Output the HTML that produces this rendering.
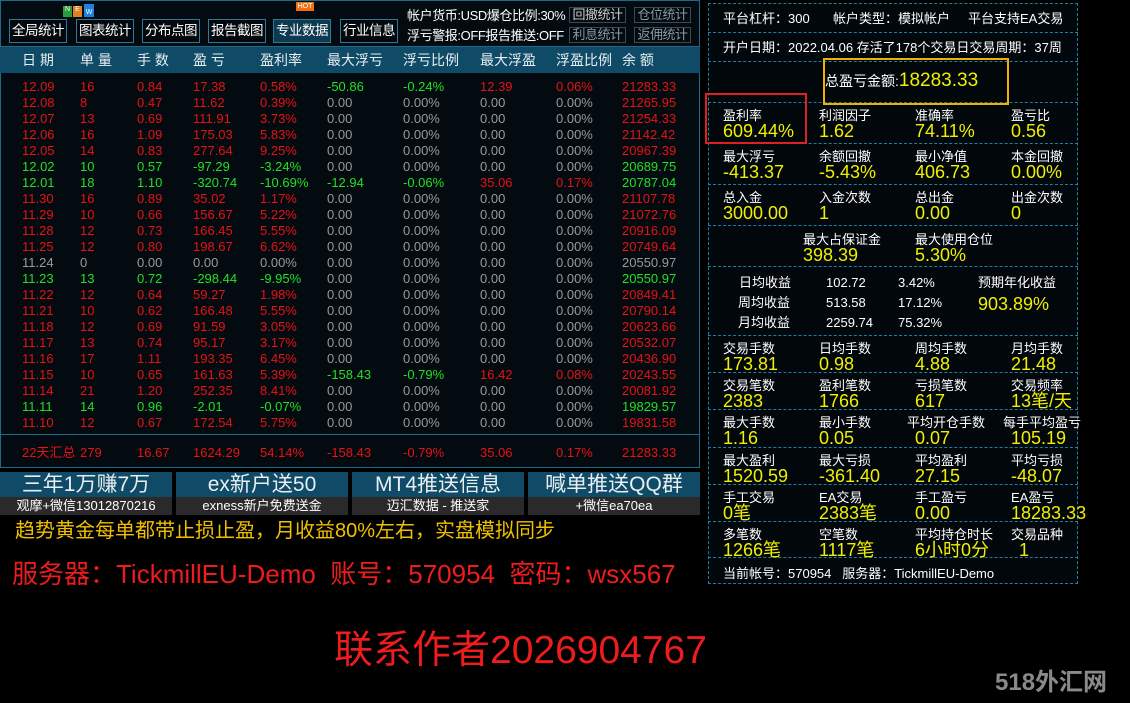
<!DOCTYPE html>
<html><head><meta charset="utf-8"><style>
*{margin:0;padding:0;box-sizing:border-box}
body{width:1130px;height:703px;background:#000;position:relative;overflow:hidden;font-family:"Liberation Sans","Noto Sans CJK SC",sans-serif;color:#fff}
.a{position:absolute;white-space:nowrap}
.btn{position:absolute;top:19px;width:58px;height:24px;border:1px solid #2a7a9a;background:#02080c;color:#fff;font-size:13.5px;line-height:22px;text-align:center;overflow:hidden;letter-spacing:-0.5px}
.sbtn{position:absolute;height:16px;width:57px;border:1px solid #3a4a55;color:#8a9aa5;font-size:13px;line-height:14px;text-align:center;overflow:hidden;letter-spacing:-0.5px}
#tbl{position:absolute;left:0;top:0;width:700px;height:468px;background:#030a10;border:1px solid #1c6a88}
.hd{position:absolute;left:0;top:46px;width:700px;height:27px;background:#0f4a66;border-top:1px solid #1c6a88}
.hd span{position:absolute;top:5px;font-size:14px;line-height:17px;color:#e8eef2}
.r{position:absolute;left:0;height:16px;width:700px;font-size:13px;line-height:16px}
.r span{position:absolute}
.r span:nth-child(1){left:22px}.r span:nth-child(2){left:80px}.r span:nth-child(3){left:137px}.r span:nth-child(4){left:193px}.r span:nth-child(5){left:260px}.r span:nth-child(6){left:327px}.r span:nth-child(7){left:403px}.r span:nth-child(8){left:480px}.r span:nth-child(9){left:556px}.r span:nth-child(10){left:622px}
.R{color:#e81212}.G{color:#22e022}.Y{color:#9a9a9a}
.ad{position:absolute;top:472px;width:172px;height:43px}
.ad .t{height:25px;background:#0f4a66;color:#e8eef2;font-size:21px;line-height:25px;text-align:center}
.ad .b{height:18px;background:#2a2a2a;color:#fff;font-size:13px;line-height:18px;text-align:center}
#rp{position:absolute;left:708px;top:3px;width:370px;height:581px;background:#02070b;border:1px dashed #1f7fa0}
.ln{position:absolute;left:708px;width:370px;border-top:1px dashed #1f7fa0}
.lb{position:absolute;font-size:13px;line-height:15px;color:#fff;white-space:nowrap}
.v{position:absolute;font-size:18px;line-height:20px;color:#f0f000;white-space:nowrap}
</style></head><body>
<div id="tbl"></div>
<div class="btn" style="left:9px">全局统计</div>
<div class="btn" style="left:76px">图表统计</div>
<div class="btn" style="left:142px">分布点图</div>
<div class="btn" style="left:208px">报告截图</div>
<div class="btn" style="left:273px;background:#0d3a50">专业数据</div>
<div class="btn" style="left:340px">行业信息</div>
<div class="a" style="left:63px;top:6px;width:9px;height:11px;background:#2a9a3a;font-size:7px;color:#fff;text-align:center">N</div>
<div class="a" style="left:73px;top:6px;width:9px;height:11px;background:#e08020;font-size:7px;color:#fff;text-align:center">E</div>
<div class="a" style="left:84px;top:4px;width:10px;height:13px;background:#2080e0;font-size:7px;color:#fff;text-align:center;line-height:17px">W</div>
<div class="a" style="left:296px;top:2px;width:18px;height:9px;background:#f07010;font-size:7px;color:#fff;text-align:center;line-height:9px">HOT</div>
<div class="a" style="left:407px;top:8px;font-size:13px;line-height:16px;color:#fff;letter-spacing:-0.4px">帐户货币:USD爆仓比例:30%</div>
<div class="a" style="left:407px;top:28px;font-size:13px;line-height:16px;color:#fff;letter-spacing:-0.4px">浮亏警报:OFF报告推送:OFF</div>
<div class="sbtn" style="left:569px;top:7px;color:#ccc">回撤统计</div>
<div class="sbtn" style="left:634px;top:7px">仓位统计</div>
<div class="sbtn" style="left:569px;top:27px">利息统计</div>
<div class="sbtn" style="left:634px;top:27px">返佣统计</div>
<div class="hd"><span style="left:22px">日 期</span><span style="left:80px">单 量</span><span style="left:137px">手 数</span><span style="left:193px">盈 亏</span><span style="left:260px">盈利率</span><span style="left:327px">最大浮亏</span><span style="left:403px">浮亏比例</span><span style="left:480px">最大浮盈</span><span style="left:556px">浮盈比例</span><span style="left:622px">余 额</span></div>

<div class="r R" style="top:79px"><span>12.09</span><span>16</span><span>0.84</span><span>17.38</span><span>0.58%</span><span class="G">-50.86</span><span class="G">-0.24%</span><span>12.39</span><span>0.06%</span><span>21283.33</span></div>
<div class="r R" style="top:95px"><span>12.08</span><span>8</span><span>0.47</span><span>11.62</span><span>0.39%</span><span class="Y">0.00</span><span class="Y">0.00%</span><span class="Y">0.00</span><span class="Y">0.00%</span><span>21265.95</span></div>
<div class="r R" style="top:111px"><span>12.07</span><span>13</span><span>0.69</span><span>111.91</span><span>3.73%</span><span class="Y">0.00</span><span class="Y">0.00%</span><span class="Y">0.00</span><span class="Y">0.00%</span><span>21254.33</span></div>
<div class="r R" style="top:127px"><span>12.06</span><span>16</span><span>1.09</span><span>175.03</span><span>5.83%</span><span class="Y">0.00</span><span class="Y">0.00%</span><span class="Y">0.00</span><span class="Y">0.00%</span><span>21142.42</span></div>
<div class="r R" style="top:143px"><span>12.05</span><span>14</span><span>0.83</span><span>277.64</span><span>9.25%</span><span class="Y">0.00</span><span class="Y">0.00%</span><span class="Y">0.00</span><span class="Y">0.00%</span><span>20967.39</span></div>
<div class="r G" style="top:159px"><span>12.02</span><span>10</span><span>0.57</span><span>-97.29</span><span>-3.24%</span><span class="Y">0.00</span><span class="Y">0.00%</span><span class="Y">0.00</span><span class="Y">0.00%</span><span>20689.75</span></div>
<div class="r G" style="top:175px"><span>12.01</span><span>18</span><span>1.10</span><span>-320.74</span><span>-10.69%</span><span>-12.94</span><span>-0.06%</span><span class="R">35.06</span><span class="R">0.17%</span><span>20787.04</span></div>
<div class="r R" style="top:191px"><span>11.30</span><span>16</span><span>0.89</span><span>35.02</span><span>1.17%</span><span class="Y">0.00</span><span class="Y">0.00%</span><span class="Y">0.00</span><span class="Y">0.00%</span><span>21107.78</span></div>
<div class="r R" style="top:207px"><span>11.29</span><span>10</span><span>0.66</span><span>156.67</span><span>5.22%</span><span class="Y">0.00</span><span class="Y">0.00%</span><span class="Y">0.00</span><span class="Y">0.00%</span><span>21072.76</span></div>
<div class="r R" style="top:223px"><span>11.28</span><span>12</span><span>0.73</span><span>166.45</span><span>5.55%</span><span class="Y">0.00</span><span class="Y">0.00%</span><span class="Y">0.00</span><span class="Y">0.00%</span><span>20916.09</span></div>
<div class="r R" style="top:239px"><span>11.25</span><span>12</span><span>0.80</span><span>198.67</span><span>6.62%</span><span class="Y">0.00</span><span class="Y">0.00%</span><span class="Y">0.00</span><span class="Y">0.00%</span><span>20749.64</span></div>
<div class="r Y" style="top:255px"><span>11.24</span><span>0</span><span>0.00</span><span>0.00</span><span>0.00%</span><span>0.00</span><span>0.00%</span><span>0.00</span><span>0.00%</span><span>20550.97</span></div>
<div class="r G" style="top:271px"><span>11.23</span><span>13</span><span>0.72</span><span>-298.44</span><span>-9.95%</span><span class="Y">0.00</span><span class="Y">0.00%</span><span class="Y">0.00</span><span class="Y">0.00%</span><span>20550.97</span></div>
<div class="r R" style="top:287px"><span>11.22</span><span>12</span><span>0.64</span><span>59.27</span><span>1.98%</span><span class="Y">0.00</span><span class="Y">0.00%</span><span class="Y">0.00</span><span class="Y">0.00%</span><span>20849.41</span></div>
<div class="r R" style="top:303px"><span>11.21</span><span>10</span><span>0.62</span><span>166.48</span><span>5.55%</span><span class="Y">0.00</span><span class="Y">0.00%</span><span class="Y">0.00</span><span class="Y">0.00%</span><span>20790.14</span></div>
<div class="r R" style="top:319px"><span>11.18</span><span>12</span><span>0.69</span><span>91.59</span><span>3.05%</span><span class="Y">0.00</span><span class="Y">0.00%</span><span class="Y">0.00</span><span class="Y">0.00%</span><span>20623.66</span></div>
<div class="r R" style="top:335px"><span>11.17</span><span>13</span><span>0.74</span><span>95.17</span><span>3.17%</span><span class="Y">0.00</span><span class="Y">0.00%</span><span class="Y">0.00</span><span class="Y">0.00%</span><span>20532.07</span></div>
<div class="r R" style="top:351px"><span>11.16</span><span>17</span><span>1.11</span><span>193.35</span><span>6.45%</span><span class="Y">0.00</span><span class="Y">0.00%</span><span class="Y">0.00</span><span class="Y">0.00%</span><span>20436.90</span></div>
<div class="r R" style="top:367px"><span>11.15</span><span>10</span><span>0.65</span><span>161.63</span><span>5.39%</span><span class="G">-158.43</span><span class="G">-0.79%</span><span>16.42</span><span>0.08%</span><span>20243.55</span></div>
<div class="r R" style="top:383px"><span>11.14</span><span>21</span><span>1.20</span><span>252.35</span><span>8.41%</span><span class="Y">0.00</span><span class="Y">0.00%</span><span class="Y">0.00</span><span class="Y">0.00%</span><span>20081.92</span></div>
<div class="r G" style="top:399px"><span>11.11</span><span>14</span><span>0.96</span><span>-2.01</span><span>-0.07%</span><span class="Y">0.00</span><span class="Y">0.00%</span><span class="Y">0.00</span><span class="Y">0.00%</span><span>19829.57</span></div>
<div class="r R" style="top:415px"><span>11.10</span><span>12</span><span>0.67</span><span>172.54</span><span>5.75%</span><span class="Y">0.00</span><span class="Y">0.00%</span><span class="Y">0.00</span><span class="Y">0.00%</span><span>19831.58</span></div>
<div class="a" style="left:0;top:434px;width:700px;border-top:1px solid #1c6a88"></div>
<div class="r R" style="top:445px"><span>22天汇总</span><span>279</span><span>16.67</span><span>1624.29</span><span>54.14%</span><span>-158.43</span><span>-0.79%</span><span>35.06</span><span>0.17%</span><span>21283.33</span></div>

<div class="ad" style="left:0"><div class="t">三年1万赚7万</div><div class="b">观摩+微信13012870216</div></div>
<div class="ad" style="left:176px"><div class="t">ex新户送50</div><div class="b">exness新户免费送金</div></div>
<div class="ad" style="left:352px"><div class="t">MT4推送信息</div><div class="b">迈汇数据 - 推送家</div></div>
<div class="ad" style="left:528px;width:172px"><div class="t">喊单推送QQ群</div><div class="b">+微信ea70ea</div></div>
<div class="a" style="left:15px;top:518px;font-size:20px;line-height:26px;color:#f0c000">趋势黄金每单都带止损止盈，月收益80%左右，实盘模拟同步</div>
<div class="a" style="left:12px;top:558px;font-size:26px;line-height:32px;color:#ee1c1c">服务器：TickmillEU-Demo&nbsp; 账号：570954&nbsp; 密码：wsx567</div>
<div class="a" style="left:334px;top:628px;font-size:39px;line-height:46px;color:#ee1c1c">联系作者2026904767</div>
<div class="a" style="left:995px;top:662px;font-size:24px;font-weight:bold;color:#8a8a8a">518外汇网</div>

<div id="rp"></div>
<div class="ln" style="top:32px"></div><div class="ln" style="top:61px"></div><div class="ln" style="top:102px"></div><div class="ln" style="top:143px"></div><div class="ln" style="top:184px"></div><div class="ln" style="top:225px"></div><div class="ln" style="top:266px"></div><div class="ln" style="top:335px"></div><div class="ln" style="top:372px"></div><div class="ln" style="top:409px"></div><div class="ln" style="top:447px"></div><div class="ln" style="top:484px"></div><div class="ln" style="top:521px"></div><div class="ln" style="top:557px"></div>
<div class="lb" style="left:723px;top:11px">平台杠杆：300</div><div class="lb" style="left:833px;top:11px">帐户类型：模拟帐户</div><div class="lb" style="left:968px;top:11px">平台支持EA交易</div>
<div class="lb" style="left:723px;top:40px">开户日期：2022.04.06 存活了178个交易日交易周期：37周</div>
<div class="a" style="left:823px;top:58px;width:186px;height:47px;border:2px solid #f0b000"></div>
<div class="lb" style="left:825px;top:71px;font-size:14px;line-height:20px">总盈亏金额:<span style="font-size:19px;color:#f0f000">18283.33</span></div>
<div class="a" style="left:705px;top:93px;width:102px;height:51px;border:2px solid #e02020"></div>
<div class="lb" style="left:723px;top:108px">盈利率</div><div class="v" style="left:723px;top:121px">609.44%</div>
<div class="lb" style="left:819px;top:108px">利润因子</div><div class="v" style="left:819px;top:121px">1.62</div>
<div class="lb" style="left:915px;top:108px">准确率</div><div class="v" style="left:915px;top:121px">74.11%</div>
<div class="lb" style="left:1011px;top:108px">盈亏比</div><div class="v" style="left:1011px;top:121px">0.56</div>
<div class="lb" style="left:723px;top:149px">最大浮亏</div><div class="v" style="left:723px;top:162px">-413.37</div>
<div class="lb" style="left:819px;top:149px">余额回撤</div><div class="v" style="left:819px;top:162px">-5.43%</div>
<div class="lb" style="left:915px;top:149px">最小净值</div><div class="v" style="left:915px;top:162px">406.73</div>
<div class="lb" style="left:1011px;top:149px">本金回撤</div><div class="v" style="left:1011px;top:162px">0.00%</div>
<div class="lb" style="left:723px;top:190px">总入金</div><div class="v" style="left:723px;top:203px">3000.00</div>
<div class="lb" style="left:819px;top:190px">入金次数</div><div class="v" style="left:819px;top:203px">1</div>
<div class="lb" style="left:915px;top:190px">总出金</div><div class="v" style="left:915px;top:203px">0.00</div>
<div class="lb" style="left:1011px;top:190px">出金次数</div><div class="v" style="left:1011px;top:203px">0</div>
<div class="lb" style="left:803px;top:232px">最大占保证金</div><div class="v" style="left:803px;top:245px">398.39</div>
<div class="lb" style="left:915px;top:232px">最大使用仓位</div><div class="v" style="left:915px;top:245px">5.30%</div>
<div class="lb" style="left:739px;top:275px">日均收益</div><div class="lb" style="left:826px;top:275px">102.72</div><div class="lb" style="left:898px;top:275px">3.42%</div>
<div class="lb" style="left:738px;top:295px">周均收益</div><div class="lb" style="left:826px;top:295px">513.58</div><div class="lb" style="left:898px;top:295px">17.12%</div>
<div class="lb" style="left:738px;top:315px">月均收益</div><div class="lb" style="left:826px;top:315px">2259.74</div><div class="lb" style="left:898px;top:315px">75.32%</div>
<div class="lb" style="left:978px;top:275px">预期年化收益</div><div class="v" style="left:978px;top:294px">903.89%</div>
<div class="lb" style="left:723px;top:341px">交易手数</div><div class="v" style="left:723px;top:354px">173.81</div>
<div class="lb" style="left:819px;top:341px">日均手数</div><div class="v" style="left:819px;top:354px">0.98</div>
<div class="lb" style="left:915px;top:341px">周均手数</div><div class="v" style="left:915px;top:354px">4.88</div>
<div class="lb" style="left:1011px;top:341px">月均手数</div><div class="v" style="left:1011px;top:354px">21.48</div>
<div class="lb" style="left:723px;top:378px">交易笔数</div><div class="v" style="left:723px;top:391px">2383</div>
<div class="lb" style="left:819px;top:378px">盈利笔数</div><div class="v" style="left:819px;top:391px">1766</div>
<div class="lb" style="left:915px;top:378px">亏损笔数</div><div class="v" style="left:915px;top:391px">617</div>
<div class="lb" style="left:1011px;top:378px">交易频率</div><div class="v" style="left:1011px;top:391px">13笔/天</div>
<div class="lb" style="left:723px;top:415px">最大手数</div><div class="v" style="left:723px;top:428px">1.16</div>
<div class="lb" style="left:819px;top:415px">最小手数</div><div class="v" style="left:819px;top:428px">0.05</div>
<div class="lb" style="left:907px;top:415px">平均开仓手数</div><div class="v" style="left:915px;top:428px">0.07</div>
<div class="lb" style="left:1003px;top:415px">每手平均盈亏</div><div class="v" style="left:1011px;top:428px">105.19</div>
<div class="lb" style="left:723px;top:453px">最大盈利</div><div class="v" style="left:723px;top:466px">1520.59</div>
<div class="lb" style="left:819px;top:453px">最大亏损</div><div class="v" style="left:819px;top:466px">-361.40</div>
<div class="lb" style="left:915px;top:453px">平均盈利</div><div class="v" style="left:915px;top:466px">27.15</div>
<div class="lb" style="left:1011px;top:453px">平均亏损</div><div class="v" style="left:1011px;top:466px">-48.07</div>
<div class="lb" style="left:723px;top:490px">手工交易</div><div class="v" style="left:723px;top:503px">0笔</div>
<div class="lb" style="left:819px;top:490px">EA交易</div><div class="v" style="left:819px;top:503px">2383笔</div>
<div class="lb" style="left:915px;top:490px">手工盈亏</div><div class="v" style="left:915px;top:503px">0.00</div>
<div class="lb" style="left:1011px;top:490px">EA盈亏</div><div class="v" style="left:1011px;top:503px">18283.33</div>
<div class="lb" style="left:723px;top:527px">多笔数</div><div class="v" style="left:723px;top:540px">1266笔</div>
<div class="lb" style="left:819px;top:527px">空笔数</div><div class="v" style="left:819px;top:540px">1117笔</div>
<div class="lb" style="left:915px;top:527px">平均持仓时长</div><div class="v" style="left:915px;top:540px">6小时0分</div>
<div class="lb" style="left:1011px;top:527px">交易品种</div><div class="v" style="left:1019px;top:540px">1</div>
<div class="lb" style="left:723px;top:566px">当前帐号：570954&nbsp;&nbsp; 服务器：TickmillEU-Demo</div>
</body></html>
